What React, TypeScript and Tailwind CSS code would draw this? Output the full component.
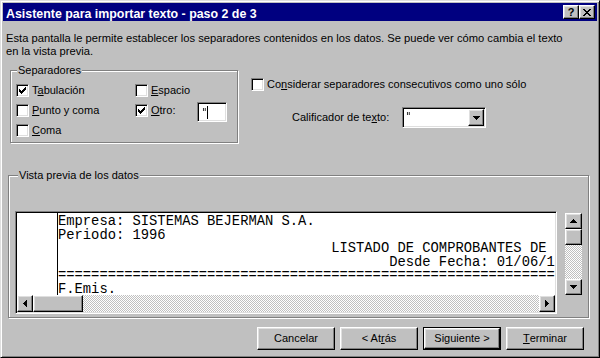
import React from 'react';

// classic 3D borders
const raised =
  'bg-[#c0c0c0] border border-t-white border-l-white border-r-black border-b-black shadow-[inset_-1px_-1px_#808080,inset_1px_1px_#dfdfdf]';
const sunken =
  'border border-t-[#808080] border-l-[#808080] border-r-white border-b-white shadow-[inset_1px_1px_#000,inset_-1px_-1px_#dfdfdf]';
const etched = 'border border-[#808080] shadow-[1px_1px_0_#fff,inset_1px_1px_0_#fff]';
const checker =
  'bg-[image:repeating-conic-gradient(#ffffff_0%_25%,#c0c0c0_0%_50%)] bg-[length:2px_2px]';

const Arrow = ({ dir }: { dir: 'up' | 'down' | 'left' | 'right' }) => {
  const paths = {
    down: 'M0 0h7v1h-1v1h-1v1h-1v1h-1v-1h-1v-1h-1v-1h-1z',
    up: 'M3 0h1v1h1v1h1v1h1v1h-7v-1h1v-1h1v-1h1z',
    left: 'M3 0h1v7h-1v-1h-1v-1h-1v-1h-1v-1h1v-1h1v-1h1z',
    right: 'M0 0h1v1h1v1h1v1h1v1h-1v1h-1v1h-1v1h-1z',
  };
  const vertical = dir === 'up' || dir === 'down';
  return (
    <svg width={vertical ? 7 : 4} height={vertical ? 4 : 7} shapeRendering="crispEdges">
      <path d={paths[dir]} fill="#000" />
    </svg>
  );
};

function Check({ checked }: { checked?: boolean }) {
  return (
    <span className={`w-[13px] h-[13px] shrink-0 bg-white flex items-center justify-center ${sunken}`}>
      {checked && (
        <svg width="7" height="7" shapeRendering="crispEdges">
          <path
            d="M6 0h1v1h-1z M5 1h2v1h-2z M0 2h1v1h-1z M4 2h3v1h-3z M0 3h2v1h-2z M3 3h3v1h-3z M0 4h5v1h-5z M1 5h3v1h-3z M2 6h1v1h-1z"
            fill="#000"
          />
        </svg>
      )}
    </span>
  );
}

function CheckRow({ checked, children }: { checked?: boolean; children: React.ReactNode }) {
  return (
    <div className="flex items-center gap-[3px] h-[20px]">
      <Check checked={checked} />
      <span className="leading-[13px]">{children}</span>
    </div>
  );
}

function Button({ children, isDefault }: { children: React.ReactNode; isDefault?: boolean }) {
  if (isDefault) {
    return (
      <div className="w-[78px] h-[23px] border border-black flex">
        <div className={`flex-1 flex items-center justify-center ${raised}`}>{children}</div>
      </div>
    );
  }
  return <div className={`w-[78px] h-[23px] flex items-center justify-center ${raised}`}>{children}</div>;
}

const preview = [
  'Empresa: SISTEMAS BEJERMAN S.A.',
  'Periodo: 1996',
  ' '.repeat(33) + 'LISTADO DE COMPROBANTES DE',
  ' '.repeat(40) + 'Desde Fecha: 01/06/1',
  '='.repeat(80),
  'F.Emis.',
];

export default function App() {
  return (
    <div className="w-[600px] h-[358px] bg-[#c0c0c0] text-black font-['Liberation_Sans',Arial,sans-serif] text-[11px] border border-t-[#dfdfdf] border-l-[#dfdfdf] border-r-black border-b-black shadow-[inset_1px_1px_#fff,inset_-1px_-1px_#808080] p-[2px] flex flex-col">
      {/* Title bar */}
      <div className="h-[18px] bg-[#000080] flex items-center pl-[3px] pr-[2px] shrink-0">
        <span className="text-white font-bold text-[12.4px] leading-[14px] mt-[3px] flex-1">
          Asistente para importar texto - paso 2 de 3
        </span>
        <div className={`w-[16px] h-[14px] flex items-center justify-center ${raised}`}>
          <span className="font-bold text-[11px] leading-[11px]">?</span>
        </div>
        <div className={`w-[16px] h-[14px] flex items-center justify-center ${raised}`}>
          <svg width="8" height="7" shapeRendering="crispEdges">
            <path
              d="M0 0h2v1h-2z M6 0h2v1h-2z M1 1h2v1h-2z M5 1h2v1h-2z M2 2h4v1h-4z M3 3h2v1h-2z M2 4h4v1h-4z M1 5h2v1h-2z M5 5h2v1h-2z M0 6h2v1h-2z M6 6h2v1h-2z"
              fill="#000"
            />
          </svg>
        </div>
      </div>

      {/* Description */}
      <p className="pt-[11px] pl-[3px] leading-[13px] text-[11.2px]">
        Esta pantalla le permite establecer los separadores contenidos en los datos. Se puede ver cómo cambia el texto
        <br />
        en la vista previa.
      </p>

      <div className="flex mt-[6px]">
        <fieldset className={`ml-[7px] w-[228px] pt-[3px] pb-[2px] pl-[5px] ${etched}`}>
          <legend className="ml-[1px] px-[1px] leading-[13px] bg-[#c0c0c0]">Separadores</legend>
          <div className="flex">
            <div className="w-[119px]">
              <CheckRow checked>
                T<u>a</u>bulación
              </CheckRow>
              <CheckRow>
                <u>P</u>unto y coma
              </CheckRow>
              <CheckRow>
                <u>C</u>oma
              </CheckRow>
            </div>
            <div className="w-[92px]">
              <CheckRow>
                <u>E</u>spacio
              </CheckRow>
              <div className="flex items-center h-[20px]">
                <CheckRow checked>
                  <u>O</u>tro:
                </CheckRow>
                <div className={`ml-auto w-[30px] h-[20px] mt-[4px] bg-white flex items-center pl-[4px] ${sunken}`}>
                  <span className="leading-[13px] text-[#000] font-['DejaVu_Sans',sans-serif] text-[10px] will-change-transform">"</span>
                  <span className="w-px h-[13px] bg-black" />
                </div>
              </div>
            </div>
          </div>
        </fieldset>

        <div className="ml-[13px] flex flex-col">
          <div className="mt-[10px]">
            <CheckRow>
              Co<u>n</u>siderar separadores consecutivos como uno sólo
            </CheckRow>
          </div>
          <div className="flex items-center mt-[13px] ml-[41px]">
            <span className="w-[110px] leading-[13px]">
              Calificador de te<u>x</u>to:
            </span>
            <div className={`w-[84px] h-[21px] bg-white flex p-px ${sunken}`}>
              <span className="flex-1 pl-[2px] leading-[15px] text-[#000] font-['DejaVu_Sans',sans-serif] text-[10px] will-change-transform">"</span>
              <div className={`w-[16px] h-[17px] flex items-center justify-center ${raised}`}>
                <Arrow dir="down" />
              </div>
            </div>
          </div>
        </div>
      </div>

      {/* Preview group */}
      <fieldset className={`ml-[5px] w-[581px] mt-[26px] pt-[29px] pb-[3px] pl-[6px] ${etched}`}>
        <legend className="ml-[3px] px-[1px] leading-[13px] bg-[#c0c0c0]">Vista previa de los datos</legend>
        <div className="flex">
          <div className={`w-[542px] h-[103px] p-px flex flex-col ${sunken}`}>
            <div className="h-[82px] bg-white flex overflow-hidden">
              <div className="w-[41px] shrink-0 border-r border-black" />
              <pre className="font-['Liberation_Mono','Courier_New',monospace] text-[13.8px] leading-[13.5px] pt-[2px] whitespace-pre">
                {preview.join('\n')}
              </pre>
            </div>
            <div className="h-[17px] flex">
              <div className={`w-[16px] flex items-center justify-center ${raised}`}>
                <Arrow dir="left" />
              </div>
              <div className={`w-[50px] ${raised}`} />
              <div className={`flex-1 ${checker}`} />
              <div className={`w-[16px] flex items-center justify-center ${raised}`}>
                <Arrow dir="right" />
              </div>
            </div>
          </div>
          <div className="ml-[8px] mt-[2px] w-[17px] h-[82px] flex flex-col">
            <div className={`h-[16px] flex items-center justify-center ${raised}`}>
              <Arrow dir="up" />
            </div>
            <div className={`h-[16px] ${raised}`} />
            <div className={`flex-1 ${checker}`} />
            <div className={`h-[16px] flex items-center justify-center ${raised}`}>
              <Arrow dir="down" />
            </div>
          </div>
        </div>
      </fieldset>

      {/* Buttons */}
      <div className="flex justify-end gap-[5px] mt-[9px] pr-[13px]">
        <Button>Cancelar</Button>
        <Button>
          &lt; At<u>r</u>ás
        </Button>
        <Button isDefault>Siguiente &gt;</Button>
        <Button>
          <u>T</u>erminar
        </Button>
      </div>
    </div>
  );
}
